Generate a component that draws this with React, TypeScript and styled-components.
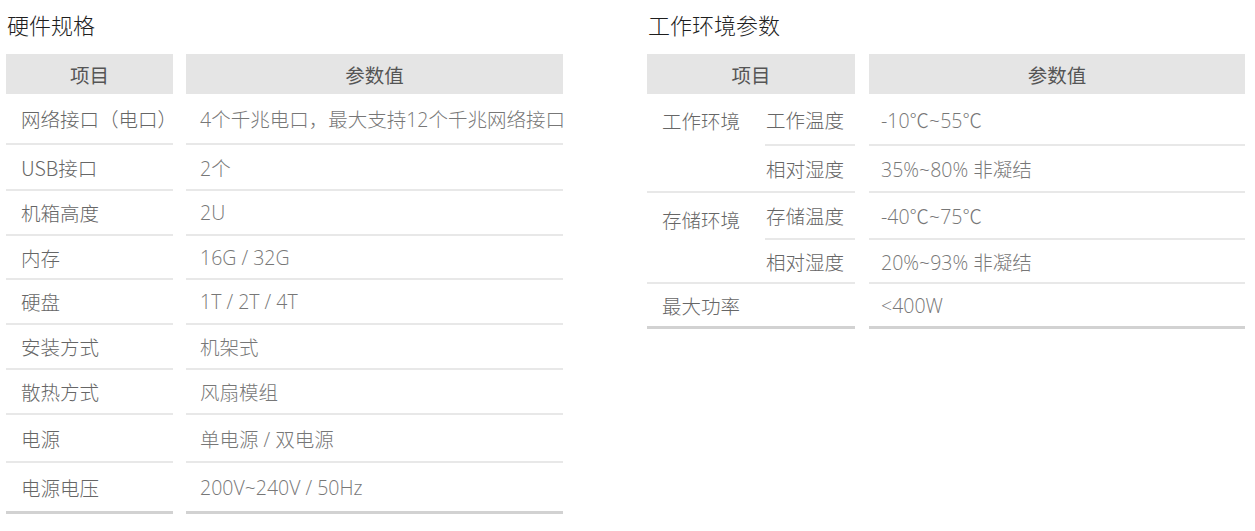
import React from "react";
import styled, { createGlobalStyle } from "styled-components";

const Global = createGlobalStyle`
  html, body { margin: 0; padding: 0; background: #fff; }
  body {
    font-family: "Open Sans", "Noto Sans CJK SC", sans-serif;
    -webkit-font-smoothing: antialiased;
  }
`;

const Page = styled.div`
  display: flex;
  align-items: flex-start;
  gap: 84px;
  padding: 0 0 0 6px;
  width: 1255px;
  height: 531px;
  box-sizing: border-box;
`;

const Section = styled.section<{ $width: number }>`
  width: ${(p) => p.$width}px;
  display: flex;
  flex-direction: column;
`;

const Title = styled.h2`
  margin: 0 0 6px 1px;
  font-size: 22px;
  line-height: 48px;
  height: 48px;
  font-weight: 300;
  color: #1e1e1e;
  font-family: "Noto Sans CJK SC", sans-serif;
`;

const Grid = styled.div<{ $cols: string; $rows: string }>`
  display: grid;
  grid-template-columns: ${(p) => p.$cols};
  grid-template-rows: ${(p) => p.$rows};
`;

const Head = styled.div<{ $span?: number; $offset?: number }>`
  grid-column: span ${(p) => p.$span || 1};
  margin-left: ${(p) => p.$offset || 0}px;
  background: #e5e5e5;
  display: flex;
  align-items: center;
  justify-content: center;
  font-size: 19.5px;
  font-weight: 400;
  color: #555;
  font-family: "Noto Sans CJK SC", sans-serif;
`;

const Cell = styled.div<{
  $span?: number;
  $rowSpan?: number;
  $offset?: number;
  $pad?: number;
  $last?: boolean;
  $value?: boolean;
}>`
  grid-column: span ${(p) => p.$span || 1};
  grid-row: span ${(p) => p.$rowSpan || 1};
  margin-left: ${(p) => p.$offset || 0}px;
  padding-left: ${(p) => (p.$pad === undefined ? 15 : p.$pad)}px;
  display: flex;
  align-items: ${(p) => (p.$rowSpan && p.$rowSpan > 1 ? "flex-start" : "center")};
  padding-top: ${(p) => (p.$rowSpan && p.$rowSpan > 1 ? "12px" : "0")};
  box-sizing: border-box;
  border-bottom: ${(p) => (p.$last ? "3px solid #d2d2d2" : "2px solid #e8e8e8")};
  font-size: 19.5px;
  white-space: nowrap;
  color: ${(p) => (p.$value ? "#777" : "#666")};
  font-weight: 300;
  font-family: ${(p) =>
    p.$value ? `"Open Sans", "Noto Sans CJK SC", sans-serif` : `"Noto Sans CJK SC", sans-serif`};
`;

const hardware: [string, string][] = [
  ["网络接口（电口）", "4个千兆电口，最大支持12个千兆网络接口"],
  ["USB接口", "2个"],
  ["机箱高度", "2U"],
  ["内存", "16G / 32G"],
  ["硬盘", "1T / 2T / 4T"],
  ["安装方式", "机架式"],
  ["散热方式", "风扇模组"],
  ["电源", "单电源 / 双电源"],
  ["电源电压", "200V~240V / 50Hz"],
];
const hwRows = "40px 51px 46px 45px 44px 45px 45px 45px 48px 51px";

export default function App() {
  return (
    <>
      <Global />
      <Page>
        <Section $width={557}>
          <Title>硬件规格</Title>
          <Grid $cols="167px 390px" $rows={hwRows}>
            <Head>项目</Head>
            <Head $offset={13}>参数值</Head>
            {hardware.map(([k, v], i) => {
              const last = i === hardware.length - 1;
              return (
                <React.Fragment key={k}>
                  <Cell $last={last}>{k}</Cell>
                  <Cell $last={last} $value $offset={13} $pad={14}>
                    {v}
                  </Cell>
                </React.Fragment>
              );
            })}
          </Grid>
        </Section>
        <Section $width={598}>
          <Title>工作环境参数</Title>
          <Grid $cols="118px 90px 390px" $rows="40px 52px 47px 47px 44px 45px">
            <Head $span={2}>项目</Head>
            <Head $offset={14}>参数值</Head>

            <Cell $rowSpan={2}>工作环境</Cell>
            <Cell $pad={1}>工作温度</Cell>
            <Cell $value $offset={14} $pad={12}>-10℃~55℃</Cell>
            <Cell $pad={1}>相对湿度</Cell>
            <Cell $value $offset={14} $pad={12}>35%~80% 非凝结</Cell>

            <Cell $rowSpan={2}>存储环境</Cell>
            <Cell $pad={1}>存储温度</Cell>
            <Cell $value $offset={14} $pad={12}>-40℃~75℃</Cell>
            <Cell $pad={1}>相对湿度</Cell>
            <Cell $value $offset={14} $pad={12}>20%~93% 非凝结</Cell>

            <Cell $span={2} $last>最大功率</Cell>
            <Cell $value $last $offset={14} $pad={12}>&lt;400W</Cell>
          </Grid>
        </Section>
      </Page>
    </>
  );
}
